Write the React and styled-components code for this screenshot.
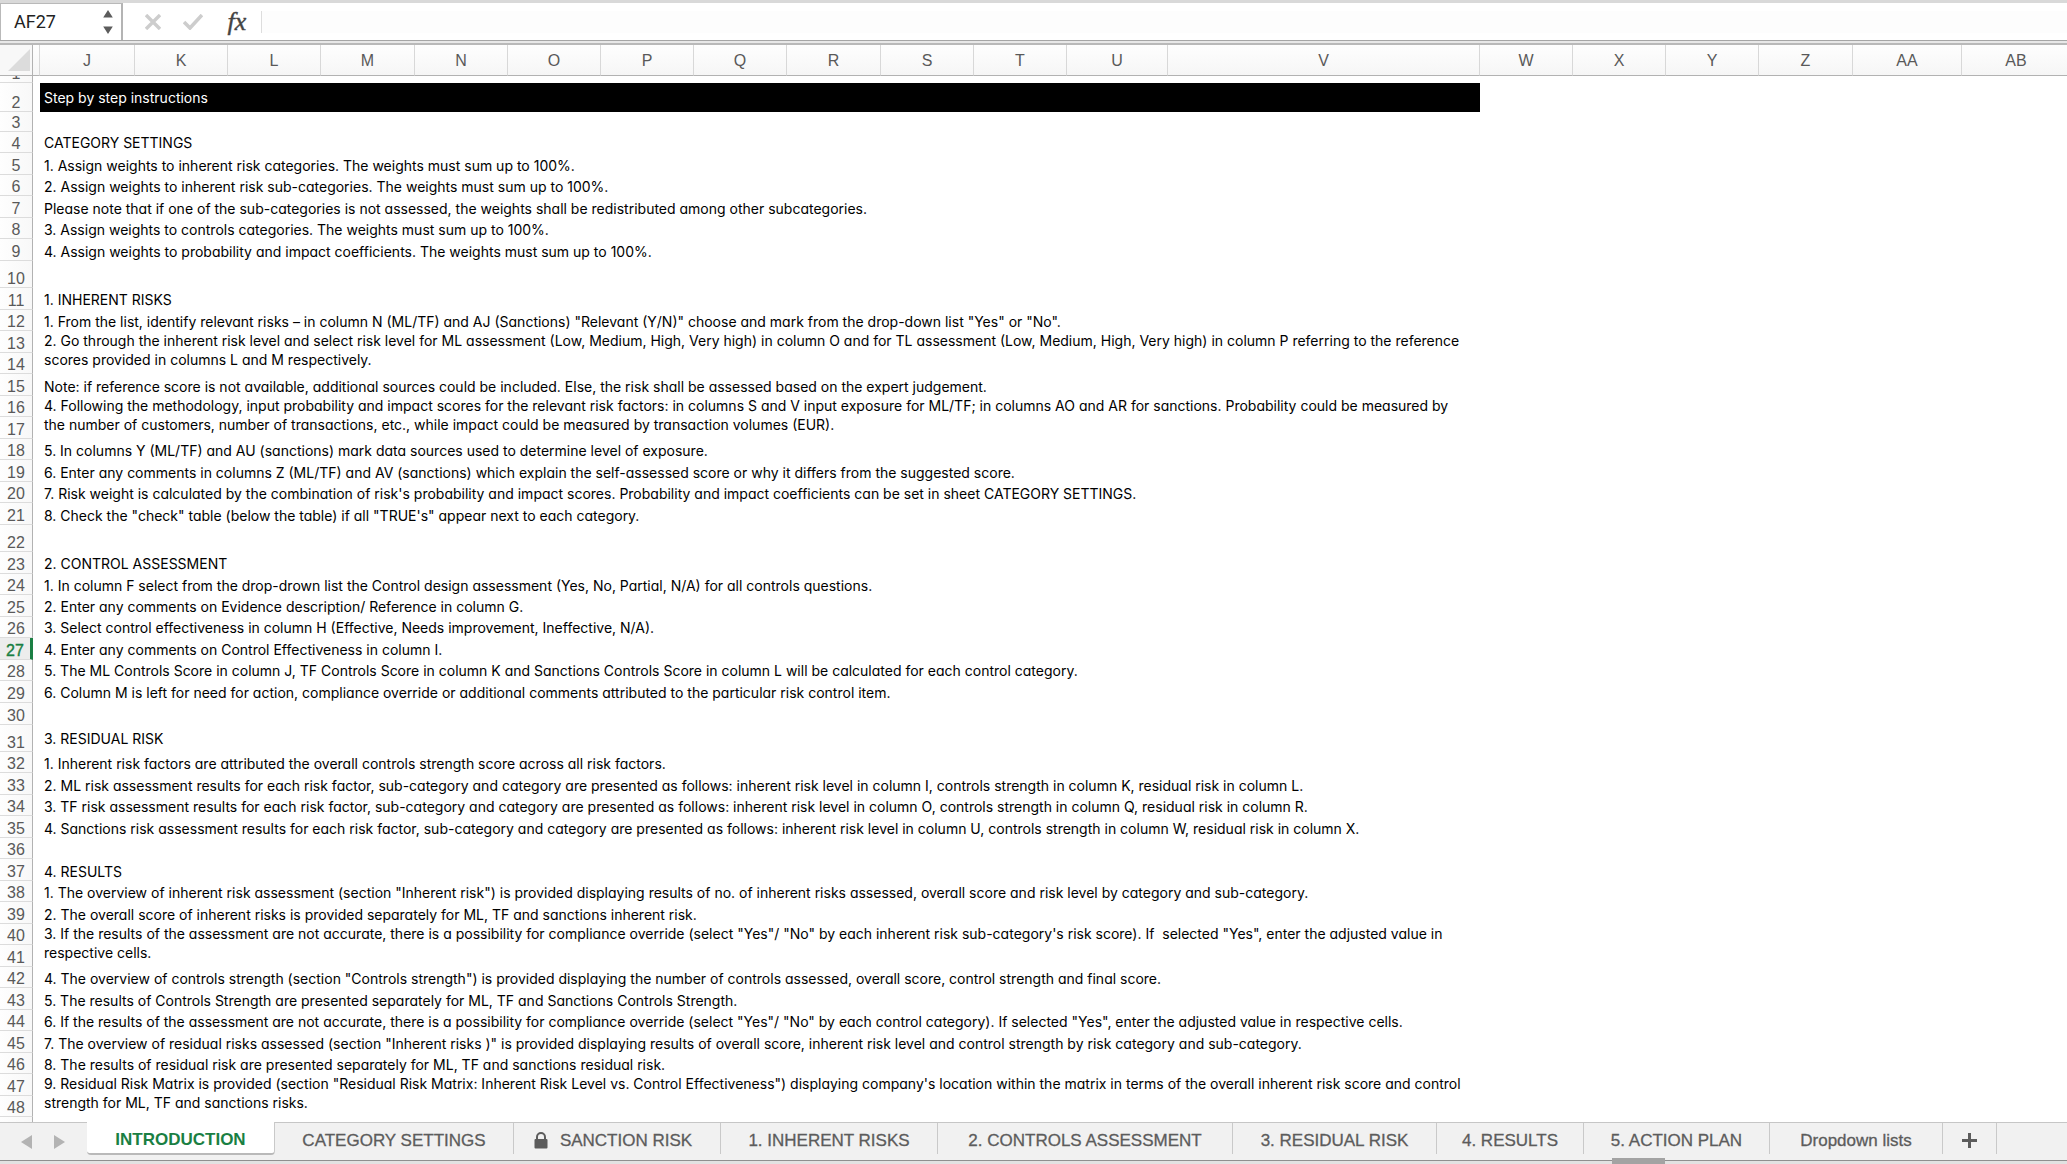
import { useState } from 'react';
import styled, { createGlobalStyle } from 'styled-components';

const columns = [
    { name: '', width: 7 },
    { name: 'J', width: 95 },
    { name: 'K', width: 93 },
    { name: 'L', width: 93 },
    { name: 'M', width: 94 },
    { name: 'N', width: 93 },
    { name: 'O', width: 93 },
    { name: 'P', width: 93 },
    { name: 'Q', width: 93 },
    { name: 'R', width: 94 },
    { name: 'S', width: 93 },
    { name: 'T', width: 93 },
    { name: 'U', width: 101 },
    { name: 'V', width: 312 },
    { name: 'W', width: 93 },
    { name: 'X', width: 93 },
    { name: 'Y', width: 93 },
    { name: 'Z', width: 94 },
    { name: 'AA', width: 109 },
    { name: 'AB', width: 109 },
];

// span: the text is merged over that many rows, align: vertical alignment of the cell
const rows = [
    { n: 1, height: 7, cut: true },
    { n: 2, height: 29, text: 'Step by step instructions', align: 'middle', banner: true },
    { n: 3, height: 20 },
    { n: 4, height: 21, text: 'CATEGORY SETTINGS', align: 'middle' },
    { n: 5, height: 22, text: '1. Assign weights to inherent risk categories. The weights must sum up to 100%.' },
    { n: 6, height: 21, text: '2. Assign weights to inherent risk sub-categories. The weights must sum up to 100%.' },
    { n: 7, height: 22, text: 'Please note that if one of the sub-categories is not assessed, the weights shall be redistributed among other subcategories.' },
    { n: 8, height: 21, text: '3. Assign weights to controls categories. The weights must sum up to 100%.' },
    { n: 9, height: 22, text: '4. Assign weights to probability and impact coefficients. The weights must sum up to 100%.' },
    { n: 10, height: 27 },
    { n: 11, height: 22, text: '1. INHERENT RISKS', align: 'middle' },
    { n: 12, height: 21, text: '1. From the list, identify relevant risks – in column N (ML/TF) and AJ (Sanctions) "Relevant (Y/N)" choose and mark from the drop-down list "Yes" or "No".' },
    { n: 13, height: 22, span: 2, align: 'top', text: '2. Go through the inherent risk level and select risk level for ML assessment (Low, Medium, High, Very high) in column O and for TL assessment (Low, Medium, High, Very high) in column P referring to the reference\nscores provided in columns L and M respectively.' },
    { n: 14, height: 21, merged: true },
    { n: 15, height: 22, text: 'Note: if reference score is not available, additional sources could be included. Else, the risk shall be assessed based on the expert judgement.' },
    { n: 16, height: 21, span: 2, align: 'top', text: '4. Following the methodology, input probability and impact scores for the relevant risk factors: in columns S and V input exposure for ML/TF; in columns AO and AR for sanctions. Probability could be measured by\nthe number of customers, number of transactions, etc., while impact could be measured by transaction volumes (EUR).' },
    { n: 17, height: 22, merged: true },
    { n: 18, height: 21, text: '5. In columns Y (ML/TF) and AU (sanctions) mark data sources used to determine level of exposure.' },
    { n: 19, height: 22, text: '6. Enter any comments in columns Z (ML/TF) and AV (sanctions) which explain the self-assessed score or why it differs from the suggested score.' },
    { n: 20, height: 21, text: "7. Risk weight is calculated by the combination of risk's probability and impact scores. Probability and impact coefficients can be set in sheet CATEGORY SETTINGS." },
    { n: 21, height: 22, text: '8. Check the "check" table (below the table) if all "TRUE\'s" appear next to each category.' },
    { n: 22, height: 27 },
    { n: 23, height: 22, text: '2. CONTROL ASSESSMENT', align: 'middle' },
    { n: 24, height: 21, text: '1. In column F select from the drop-drown list the Control design assessment (Yes, No, Partial, N/A) for all controls questions.' },
    { n: 25, height: 22, text: '2. Enter any comments on Evidence description/ Reference in column G.', align: 'middle' },
    { n: 26, height: 21, text: '3. Select control effectiveness in column H (Effective, Needs improvement, Ineffective, N/A).', align: 'middle' },
    { n: 27, height: 22, text: '4. Enter any comments on Control Effectiveness in column I.', align: 'middle' },
    { n: 28, height: 21, text: '5. The ML Controls Score in column J, TF Controls Score in column K and Sanctions Controls Score in column L will be calculated for each control category.', align: 'middle' },
    { n: 29, height: 22, text: '6. Column M is left for need for action, compliance override or additional comments attributed to the particular risk control item.', align: 'middle' },
    { n: 30, height: 22 },
    { n: 31, height: 27, text: '3. RESIDUAL RISK', align: 'middle' },
    { n: 32, height: 21, text: '1. Inherent risk factors are attributed the overall controls strength score across all risk factors.' },
    { n: 33, height: 22, text: '2. ML risk assessment results for each risk factor, sub-category and category are presented as follows: inherent risk level in column I, controls strength in column K, residual risk in column L.' },
    { n: 34, height: 21, text: '3. TF risk assessment results for each risk factor, sub-category and category are presented as follows: inherent risk level in column O, controls strength in column Q, residual risk in column R.' },
    { n: 35, height: 22, text: '4. Sanctions risk assessment results for each risk factor, sub-category and category are presented as follows: inherent risk level in column U, controls strength in column W, residual risk in column X.' },
    { n: 36, height: 21 },
    { n: 37, height: 22, text: '4. RESULTS' },
    { n: 38, height: 21, text: '1. The overview of inherent risk assessment (section "Inherent risk") is provided displaying results of no. of inherent risks assessed, overall score and risk level by category and sub-category.' },
    { n: 39, height: 22, text: '2. The overall score of inherent risks is provided separately for ML, TF and sanctions inherent risk.' },
    { n: 40, height: 21, span: 2, align: 'top', text: '3. If the results of the assessment are not accurate, there is a possibility for compliance override (select "Yes"/ "No" by each inherent risk sub-category\'s risk score). If  selected "Yes", enter the adjusted value in\nrespective cells.' },
    { n: 41, height: 22, merged: true },
    { n: 42, height: 21, text: '4. The overview of controls strength (section "Controls strength") is provided displaying the number of controls assessed, overall score, control strength and final score.' },
    { n: 43, height: 22, text: '5. The results of Controls Strength are presented separately for ML, TF and Sanctions Controls Strength.' },
    { n: 44, height: 21, text: '6. If the results of the assessment are not accurate, there is a possibility for compliance override (select "Yes"/ "No" by each control category). If selected "Yes", enter the adjusted value in respective cells.' },
    { n: 45, height: 22, text: '7. The overview of residual risks assessed (section "Inherent risks )" is provided displaying results of overall score, inherent risk level and control strength by risk category and sub-category.' },
    { n: 46, height: 21, text: '8. The results of residual risk are presented separately for ML, TF and sanctions residual risk.' },
    { n: 47, height: 22, span: 2, align: 'top', text: '9. Residual Risk Matrix is provided (section "Residual Risk Matrix: Inherent Risk Level vs. Control Effectiveness") displaying company\'s location within the matrix in terms of the overall inherent risk score and control\nstrength for ML, TF and sanctions risks.' },
    { n: 48, height: 21, merged: true },
];

const sheets = [
    { name: 'INTRODUCTION', width: 188 },
    { name: 'CATEGORY SETTINGS', width: 239 },
    { name: 'SANCTION RISK', width: 207, locked: true },
    { name: '1. INHERENT RISKS', width: 217 },
    { name: '2. CONTROLS ASSESSMENT', width: 295 },
    { name: '3. RESIDUAL RISK', width: 204 },
    { name: '4. RESULTS', width: 147 },
    { name: '5. ACTION PLAN', width: 186 },
    { name: 'Dropdown lists', width: 173 },
];

export default function App() {
    const [activeSheet, setActiveSheet] = useState('INTRODUCTION');
    const [formula, setFormula] = useState('');
    const selectedRow = 27;

    return (
        <>
            <GlobalStyle />
            <Workbook>
                <FormulaBar>
                    <NameBox>
                        <NameInput aria-label="Name box" defaultValue="AF27" />
                        <svg width="10" height="26" viewBox="0 0 10 26" fill="#5c5c5c">
                            <path d="M5 1 L9.8 8.5 H0.2 Z M0.2 17.5 H9.8 L5 25 Z" />
                        </svg>
                    </NameBox>
                    <BarButton aria-label="Cancel">
                        <svg width="16" height="16" viewBox="0 0 16 16" fill="none" stroke="#cdcdcd" strokeWidth="3.4">
                            <path d="M1 1 L15 15 M15 1 L1 15" />
                        </svg>
                    </BarButton>
                    <BarButton aria-label="Enter">
                        <svg width="20" height="16" viewBox="0 0 20 16" fill="none" stroke="#cdcdcd" strokeWidth="3.6">
                            <path d="M1 8 L7 14 L19 1" />
                        </svg>
                    </BarButton>
                    <FxButton aria-label="Insert function">fx</FxButton>
                    <FormulaInput
                        aria-label="Formula"
                        value={formula}
                        onChange={(e) => setFormula(e.target.value)}
                    />
                </FormulaBar>
                <Splitter />

                <Sheet>
                    <Grid>
                        <colgroup>
                            <Col $width={33} />
                            {columns.map((col) => <Col key={col.name} $width={col.width} />)}
                        </colgroup>
                        <thead>
                            <tr>
                                <Corner>
                                    <svg width="22" height="22" viewBox="0 0 22 22" fill="#dcdcdc">
                                        <path d="M22 0 V22 H0 Z" />
                                    </svg>
                                </Corner>
                                {columns.map((col) => <ColumnHeader key={col.name} scope="col">{col.name}</ColumnHeader>)}
                            </tr>
                        </thead>
                        <tbody>
                            {rows.map((row) => (
                                <Row key={row.n} $height={row.height}>
                                    <RowHeader scope="row" $selected={row.n === selectedRow}>
                                        {row.cut ? <CutNumber>{row.n}</CutNumber> : row.n}
                                    </RowHeader>
                                    <td />
                                    {!row.merged && (
                                        <TextCell
                                            colSpan={13}
                                            rowSpan={row.span || 1}
                                            $align={row.align}
                                            $banner={row.banner}
                                        >
                                            {row.text}
                                        </TextCell>
                                    )}
                                    <td colSpan={6} />
                                </Row>
                            ))}
                        </tbody>
                    </Grid>
                    <Gutter />
                </Sheet>

                <TabBar>
                    <TabNav>
                        <ArrowButton aria-label="Previous sheet">
                            <svg width="11" height="14" viewBox="0 0 11 14" fill="#b3b3b3"><path d="M11 0 V14 L0 7 Z" /></svg>
                        </ArrowButton>
                        <ArrowButton aria-label="Next sheet">
                            <svg width="11" height="14" viewBox="0 0 11 14" fill="#b3b3b3"><path d="M0 0 V14 L11 7 Z" /></svg>
                        </ArrowButton>
                    </TabNav>
                    {sheets.map((sheet) => (
                        <Tab
                            key={sheet.name}
                            $width={sheet.width}
                            $active={sheet.name === activeSheet}
                            $locked={sheet.locked}
                            onClick={() => setActiveSheet(sheet.name)}
                        >
                            {sheet.locked && (
                                <svg width="14" height="17" viewBox="0 0 14 17">
                                    <path d="M3 8 V5 a4 4 0 0 1 8 0 V8" fill="none" stroke="#5c5c5c" strokeWidth="2" />
                                    <rect x="0.5" y="7" width="13" height="9.5" rx="1" fill="#5c5c5c" />
                                </svg>
                            )}
                            {sheet.name}
                        </Tab>
                    ))}
                    <Tab $width={54} aria-label="Add sheet">
                        <svg width="15" height="15" viewBox="0 0 15 15" stroke="#5c5c5c" strokeWidth="3">
                            <path d="M7.5 0 V15 M0 7.5 H15" />
                        </svg>
                    </Tab>
                </TabBar>
                <ScrollTrack>
                    <ScrollThumb />
                </ScrollTrack>
            </Workbook>
        </>
    );
}

const GlobalStyle = createGlobalStyle`
    * {
        box-sizing: border-box;
    }

    body {
        margin: 0;
        background: #ffffff;
        font-family: "Liberation Sans", Arial, sans-serif;
    }

    button, input {
        border: none;
        padding: 0;
        background: none;
        font-family: inherit;
    }

    svg {
        display: block;
        flex-shrink: 0;
    }
`;

const Workbook = styled.div`
    display: flex;
    flex-direction: column;
    height: 100vh;
    overflow: hidden;
`;

const FormulaBar = styled.div`
    display: flex;
    align-items: center;
    flex-shrink: 0;
    height: 40px;
    border-top: 3px solid #d9d9d9;
    background: #ffffff;
`;

const NameBox = styled.div`
    display: flex;
    align-items: center;
    width: 123px;
    height: 37px;
    padding: 0 8px 1px 13px;
    border: 1px solid #b9b9b9;
    border-right: 2px solid #b4b4b4;
    border-bottom: none;
`;

const NameInput = styled.input`
    flex: 1;
    min-width: 0;
    color: #222222;
    font-family: Roboto, sans-serif;
    font-size: 18px;
    line-height: 22px;
`;

const BarButton = styled.button`
    display: flex;
    align-items: center;
    justify-content: center;
    width: 20px;
    height: 24px;
    margin-left: 20px;
`;

const FxButton = styled.button`
    width: 32px;
    height: 24px;
    margin: 0 8px 0 18px;
    color: #444444;
    font-family: "Liberation Serif", serif;
    font-size: 26px;
    font-style: italic;
    line-height: 22px;
    -webkit-text-stroke: 0.4px #444444;
`;

const FormulaInput = styled.input`
    flex: 1;
    height: 22px;
    padding: 0 10px;
    border-left: 1px solid #dddddd;
    background: #fdfdfd;
    font-size: 16px;
    outline: none;
`;

const Splitter = styled.div`
    flex-shrink: 0;
    height: 5px;
    border-top: 1px solid #a6a6a6;
    border-bottom: 2px solid #b9b9b9;
    background: #e8e8e8;
`;

const Sheet = styled.main`
    display: flex;
    flex-direction: column;
    flex: 1;
    min-height: 0;
    overflow: hidden;
`;

const Grid = styled.table`
    flex-shrink: 0;
    width: max-content;
    table-layout: fixed;
    border-collapse: separate;
    border-spacing: 0;

    td, th {
        padding: 0;
    }
`;

// row header strip that continues below the last row
const Gutter = styled.div`
    flex: 1;
    width: 33px;
    border-right: 1px solid #b2b2b2;
    background: linear-gradient(90deg, #fefefe, #f8f8f8);
`;

const Col = styled.col`
    width: ${(props) => props.$width}px;
`;

const Corner = styled.td`
    height: 31px;
    border-right: 1px solid #b2b2b2;
    border-bottom: 1px solid #b2b2b2;
    background: #f8f8f8;

    svg {
        margin-left: 8px;
    }
`;

const ColumnHeader = styled.th`
    && {
        padding-top: 2px;
    }
    border-right: 1px solid #d8d8d8;
    border-bottom: 1px solid #b2b2b2;
    background: linear-gradient(#fefefe, #f6f6f6);
    color: #595959;
    font-size: 16px;
    font-weight: 400;
    line-height: 20px;
`;

const Row = styled.tr`
    height: ${(props) => props.$height}px;
`;

const RowHeader = styled.th`
    border-right: ${(props) => (props.$selected ? '3px solid #1a7f43' : '1px solid #b2b2b2')};
    border-bottom: 1px solid #dcdcdc;
    background: ${(props) => (props.$selected ? '#ededed' : 'linear-gradient(90deg, #fefefe, #f8f8f8)')};
    color: ${(props) => (props.$selected ? '#1a7f43' : '#595959')};
    font-size: 16px;
    font-weight: 400;
    line-height: 16px;
    vertical-align: bottom;
    -webkit-text-stroke: ${(props) => (props.$selected ? '0.4px #1a7f43' : '0')};
`;

const CutNumber = styled.div`
    display: flex;
    align-items: flex-end;
    justify-content: center;
    height: 6px;
    overflow: hidden;
`;

const TextCell = styled.td`
    && {
        padding-left: 4px;
    }
    background: ${(props) => (props.$banner ? '#000000' : 'transparent')};
    color: ${(props) => (props.$banner ? '#ffffff' : '#000000')};
    font-family: Inter, sans-serif;
    font-feature-settings: "cv11";
    font-size: 14px;
    line-height: ${(props) => (props.$align ? 19 : 18)}px;
    white-space: pre;
    vertical-align: ${(props) => props.$align || 'bottom'};
`;

const TabBar = styled.nav`
    display: flex;
    flex-shrink: 0;
    height: 38px;
    border-top: 1px solid #c6c6c6;
    background: #f1f1f1;
`;

const TabNav = styled.div`
    display: flex;
    width: 87px;
    padding: 12px 0 0 21px;
    gap: 22px;
`;

const ArrowButton = styled.button`
    width: 11px;
    height: 14px;
`;

const Tab = styled.button`
    display: flex;
    align-items: center;
    justify-content: center;
    flex-shrink: 0;
    gap: 12px;
    width: ${(props) => props.$width}px;
    height: ${(props) => (props.$active ? 33 : 31)}px;
    margin-top: ${(props) => (props.$active ? -1 : 0)}px;
    padding: 4px ${(props) => (props.$locked ? 8 : 0)}px 0 0;
    border-right: 1px solid #c9c9c9;
    border-bottom: ${(props) => (props.$active ? '2px solid #b9b9b9' : 'none')};
    border-radius: ${(props) => (props.$active ? '0 0 4px 4px' : '0')};
    background: ${(props) => (props.$active ? '#ffffff' : 'transparent')};
    color: ${(props) => (props.$active ? '#1a7f43' : '#5c5c5c')};
    font-size: 17px;
    font-weight: ${(props) => (props.$active ? 700 : 400)};
    line-height: 22px;
    white-space: nowrap;
    -webkit-text-stroke: ${(props) => (props.$active ? '0' : '0.3px #5c5c5c')};
`;

const ScrollTrack = styled.div`
    flex-shrink: 0;
    height: 4px;
    padding-left: 78%;
    border-top: 1px solid #8f8f8f;
    background: #e2e2e2;
`;

const ScrollThumb = styled.div`
    width: 53px;
    height: 6px;
    margin-top: -3px;
    background: #a3a3a3;
`;
